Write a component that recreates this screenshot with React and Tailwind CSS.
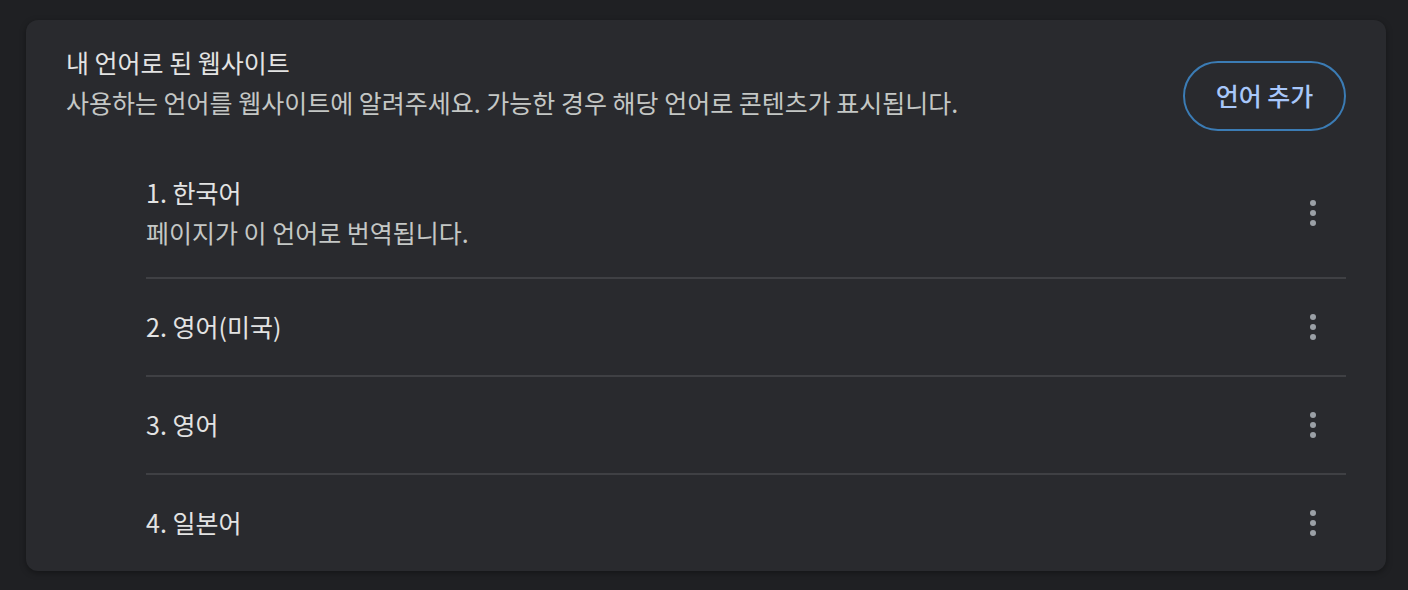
const languages = [
  { name: "1. 한국어", note: "페이지가 이 언어로 번역됩니다." },
  { name: "2. 영어(미국)" },
  { name: "3. 영어" },
  { name: "4. 일본어" },
];

function MoreIcon() {
  return (
    <button className="flex flex-col items-center gap-[4px] mr-[30px]">
      <span className="w-[6px] h-[6px] rounded-full bg-[#9aa0a6]" />
      <span className="w-[6px] h-[6px] rounded-full bg-[#9aa0a6]" />
      <span className="w-[6px] h-[6px] rounded-full bg-[#9aa0a6]" />
    </button>
  );
}

export default function App() {
  return (
    <div
      className="min-h-[590px] bg-[#1f2023] pl-[26px] pr-[22px] pt-[20px] pb-[20px]"
      style={{ fontFamily: '"Noto Sans CJK KR", "Noto Sans", sans-serif' }}
    >
      <div className="bg-[#292a2e] rounded-[12px] shadow-[0_2px_6px_rgba(0,0,0,0.35)] px-[40px] pt-[22px]">
        {/* Header */}
        <div className="flex justify-between items-start">
          <div className="text-[25px] leading-[40px]">
            <div className="text-[#e3e3e3]">내 언어로 된 웹사이트</div>
            <div className="text-[#c4c7c5]">사용하는 언어를 웹사이트에 알려주세요. 가능한 경우 해당 언어로 콘텐츠가 표시됩니다.</div>
          </div>
          <button className="mt-[19px] h-[70px] w-[163px] rounded-full border-2 border-[#3b7cb5] text-[#a8c7fa] text-[25px] font-medium">
            언어 추가
          </button>
        </div>

        {/* Language list */}
        <div className="ml-[80px] mt-[18px]">
          {languages.map((lang, i) => {
            const last = i === languages.length - 1;
            return (
              <div
                key={lang.name}
                className={`flex items-center justify-between ${
                  lang.note ? "h-[130px]" : last ? "h-[96px]" : "h-[98px]"
                } ${last ? "" : "border-b-2 border-[#3f4044]"}`}
              >
                <div className="text-[25px] leading-[40px] -mt-[3px]">
                  <div className="text-[#e3e3e3]">{lang.name}</div>
                  {lang.note && <div className="text-[#c4c7c5]">{lang.note}</div>}
                </div>
                <MoreIcon />
              </div>
            );
          })}
        </div>
      </div>
    </div>
  );
}
